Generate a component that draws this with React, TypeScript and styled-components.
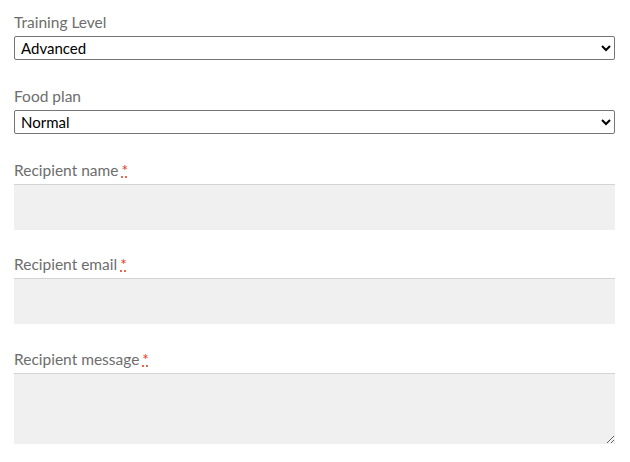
import React from "react";
import styled, { createGlobalStyle } from "styled-components";

const Global = createGlobalStyle`
  html, body { margin: 0; padding: 0; background: #fff; }
  body { font-family: "Lato", "Liberation Sans", sans-serif; }
`;

const Form = styled.form`
  display: flex;
  flex-direction: column;
  padding: 10px 15px 0 14px;
`;

const Field = styled.div<{ $gap: number }>`
  display: flex;
  flex-direction: column;
  margin-bottom: ${(p) => p.$gap}px;
`;

const Label = styled.label`
  font-family: "Lato", "Liberation Sans", sans-serif;
  font-size: 15.5px;
  line-height: 24px;
  color: #6d6d6d;
  margin-bottom: 2px;
`;

const Req = styled.abbr`
  color: #e2401c;
  text-decoration: underline dotted;
  margin-left: 3px;
  cursor: help;
`;

const Select = styled.select`
  width: 100%;
  height: 24px;
  font-family: "Lato", "Liberation Sans", sans-serif;
  font-size: 15px;
  color: #000;
  border: 1px solid #767676;
  border-radius: 2px;
  background: #fff;
  padding: 0 2px;
  box-sizing: border-box;
`;

const Input = styled.input`
  width: 100%;
  height: 46px;
  box-sizing: border-box;
  border: none;
  border-top: 1px solid #d3d3d3;
  background: #f0f0f0;
  outline: none;
  font-family: "Lato", "Liberation Sans", sans-serif;
  font-size: 15px;
`;

const TextArea = styled.textarea`
  width: 100%;
  height: 71px;
  box-sizing: border-box;
  border: none;
  border-top: 1px solid #d3d3d3;
  background: #f0f0f0;
  outline: none;
  display: block;
  font-family: "Lato", "Liberation Sans", sans-serif;
  font-size: 15px;
`;

export default function App() {
  return (
    <>
      <Global />
      <Form>
        <Field $gap={24}>
          <Label>Training Level</Label>
          <Select defaultValue="advanced">
            <option value="beginner">Beginner</option>
            <option value="advanced">Advanced</option>
          </Select>
        </Field>
        <Field $gap={24}>
          <Label>Food plan</Label>
          <Select defaultValue="normal">
            <option value="normal">Normal</option>
            <option value="vegan">Vegan</option>
          </Select>
        </Field>
        <Field $gap={22}>
          <Label>
            Recipient name<Req title="required">*</Req>
          </Label>
          <Input type="text" />
        </Field>
        <Field $gap={23}>
          <Label>
            Recipient email<Req title="required">*</Req>
          </Label>
          <Input type="email" />
        </Field>
        <Field $gap={0}>
          <Label>
            Recipient message<Req title="required">*</Req>
          </Label>
          <TextArea />
        </Field>
      </Form>
    </>
  );
}
